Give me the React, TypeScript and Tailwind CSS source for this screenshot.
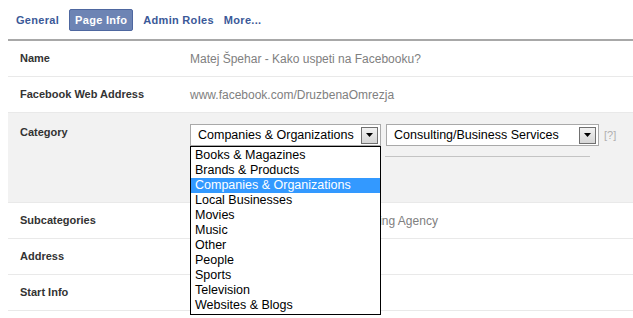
import { useState } from 'react';

const tabs = ['General', 'Page Info', 'Admin Roles', 'More...'];

const categories = [
  'Books & Magazines',
  'Brands & Products',
  'Companies & Organizations',
  'Local Businesses',
  'Movies',
  'Music',
  'Other',
  'People',
  'Sports',
  'Television',
  'Websites & Blogs',
];

function Arrow() {
  return (
    <span className="flex h-[17px] w-[17px] items-center justify-center border border-[#707070] bg-gradient-to-b from-[#f2f2f2] to-[#d6d6d6]">
      <svg width="7" height="4" viewBox="0 0 7 4">
        <path d="M0 0h7L3.5 4z" fill="#000" />
      </svg>
    </span>
  );
}

function Row({ label, children, tall }: { label: string; children?: React.ReactNode; tall?: boolean }) {
  return (
    <div
      className={`flex border-b border-[#e9e9e9] ${tall ? 'h-[90px] bg-[#f2f2f2]' : 'h-[36px] items-center'}`}
    >
      <div className={`w-[182px] shrink-0 pl-3 text-[11px] font-bold text-[#333] ${tall ? 'pt-[11px]' : ''}`}>
        {label}
      </div>
      <div className="relative flex-1 text-[12px] text-[#808080]">{children}</div>
    </div>
  );
}

export default function App() {
  const [active] = useState('Page Info');
  const [selected] = useState('Companies & Organizations');

  return (
    <div className="h-[318px] w-[633px] overflow-hidden bg-white font-['Liberation_Sans',Arial,sans-serif]">
      {/* Tabs */}
      <div className="flex h-[39px] items-center gap-[10px] pl-[16px] pt-[1px] tracking-[0.3px]">
        {tabs.map((t) => (
          <span
            key={t}
            className={
              t === active
                ? 'rounded-[2px] border border-[#4e67a0] bg-[#6d84b4] px-[5px] py-[2px] text-[11px] font-bold text-white'
                : 'text-[11px] font-bold text-[#3b5998]'
            }
          >
            {t}
          </span>
        ))}
      </div>

      <div className="ml-2 border-t-2 border-[#a8a8a8]">
        <Row label="Name">Matej Špehar - Kako uspeti na Facebooku?</Row>
        <Row label="Facebook Web Address">www.facebook.com/DruzbenaOmrezja</Row>
        <Row label="Category" tall>
          <div className="flex items-center gap-[5px] pt-[11px]">
            <div className="flex h-[22px] w-[191px] items-center justify-between border border-[#a9a9a9] bg-white pl-[7px] pr-[2px] text-[12.5px] text-black">
              <span>{selected}</span>
              <Arrow />
            </div>
            <div className="flex h-[22px] w-[213px] items-center justify-between border border-[#a9a9a9] bg-white pl-[7px] pr-[2px] text-[12.5px] text-black">
              <span>Consulting/Business Services</span>
              <Arrow />
            </div>
            <span className="text-[11px] text-[#b0b0b0]">[?]</span>
          </div>
          <div className="ml-[195px] mt-[10px] h-px w-[205px] bg-[#c4c4c4]" />

          {/* Open dropdown list */}
          <div className="absolute left-0 top-[33px] z-10 w-[191px] border border-black bg-white py-[1px] text-[12.5px] leading-[15px] text-black">
            {categories.map((c) => (
              <div
                key={c}
                className={`pl-[4px] ${c === selected ? 'bg-[#3399ff] text-white' : ''}`}
              >
                {c}
              </div>
            ))}
          </div>
        </Row>
        <Row label="Subcategories">News Company, Advertising/Marketing Agency</Row>
        <Row label="Address" />
        <Row label="Start Info" />
      </div>
    </div>
  );
}
